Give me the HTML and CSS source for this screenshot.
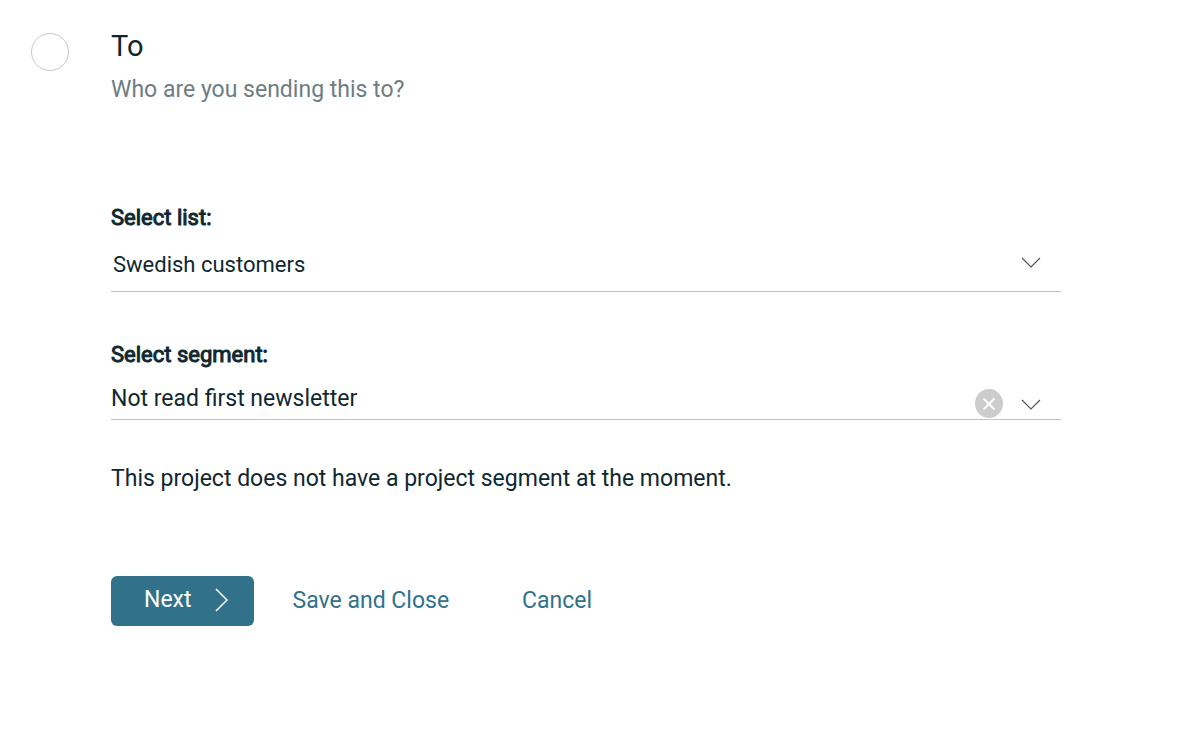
FILE: index.html
```html
<!DOCTYPE html>
<html lang="en">
<head>
<meta charset="utf-8">
<meta name="viewport" content="width=device-width, initial-scale=1">
<title>To</title>
<link rel="stylesheet" href="styles.css">
</head>
<body>
<main class="step">
  <input class="step-marker" type="radio" name="step" aria-labelledby="step-title">
  <form class="step-body">
    <h1 class="title" id="step-title">To</h1>
    <p class="subtitle">Who are you sending this to?</p>

    <label class="label" for="list">Select list:</label>
    <div class="field field-list">
      <select class="select" id="list"><option>Swedish customers</option></select>
      <span class="field-icons">
        <svg class="chevron" viewBox="0 0 20 12" aria-hidden="true"><path d="M1 1l9 9 9-9"/></svg>
      </span>
    </div>

    <label class="label" for="segment">Select segment:</label>
    <div class="field field-segment">
      <select class="select" id="segment"><option>Not read first newsletter</option></select>
      <span class="field-icons">
        <button class="clear" type="button" aria-label="Clear segment">
          <svg class="cross" viewBox="0 0 14 14" aria-hidden="true"><path d="M1.500 1.500l11 11M12.500 1.500l-11 11"/></svg>
        </button>
        <svg class="chevron" viewBox="0 0 20 12" aria-hidden="true"><path d="M1 1l9 9 9-9"/></svg>
      </span>
    </div>

    <p class="note">This project does not have a project segment at the moment.</p>

    <div class="actions">
      <button class="next" type="button">Next
        <svg class="arrow" viewBox="0 0 13 24" aria-hidden="true"><path d="M1 1l11 11L1 23"/></svg>
      </button>
      <button class="link" type="button">Save and Close</button>
      <button class="link" type="button">Cancel</button>
    </div>
  </form>
</main>
</body>
</html>
```
FILE: styles.css
```css
* { box-sizing: border-box; }

body {
  margin: 0;
  background: #fff;
  color: #0f2830;
  font: 23px/30px Roboto, sans-serif;
}

.step {
  display: flex;
  align-items: flex-start;
  gap: 42px;
  padding: 28px 117px 40px 31px;
}

.step-marker {
  appearance: none;
  flex: none;
  width: 38px;
  height: 38px;
  margin: 5px 0 0;
  border: 1px solid #c8c8c8;
  border-radius: 50%;
}

.step-body { flex: 1; min-width: 0; }

.title {
  margin: 0;
  font-size: 29px;
  line-height: 36px;
  font-weight: 400;
}

.subtitle { margin: 11px 0 98px; color: #6d7d83; }

.label {
  display: block;
  font-size: 22px;
  -webkit-text-stroke: 1px currentColor;
}

.field {
  display: grid;
  align-items: center;
  border-bottom: 1px solid #b9c3ca;
}

.field-list { height: 59px; margin-bottom: 48px; }
.field-list .select { padding-left: 2px; padding-top: 6px; font-size: 22px; }
.field-segment { height: 50px; }
.field-segment .select { padding-top: 8px; }

.select {
  grid-area: 1 / 1;
  appearance: none;
  width: 100%;
  height: 100%;
  border: 0;
  padding: 0;
  background: transparent;
  color: inherit;
  font: inherit;
}

.field-icons {
  grid-area: 1 / 1;
  justify-self: end;
  display: flex;
  align-items: center;
  gap: 18px;
  padding-right: 20px;
  pointer-events: none;
}

.field-segment .field-icons { align-self: end; padding-bottom: 1px; }

.chevron, .cross, .arrow { display: block; fill: none; stroke: currentColor; }
.chevron { width: 20px; height: 12px; margin-top: 2px; color: #555; stroke-width: 1.2; }

.clear {
  display: grid;
  place-items: center;
  width: 28px;
  height: 29px;
  padding: 0;
  border: 0;
  border-radius: 50%;
  background: #ccc;
  color: #fff;
  pointer-events: auto;
}

.cross { width: 14px; height: 14px; stroke-width: 2; }

.note { margin: 44px 0 82px; }

.actions { display: flex; align-items: center; }

.next, .link {
  border: 0;
  padding: 0;
  background: none;
  color: #32718a;
  font: inherit;
}

.next {
  display: flex;
  align-items: center;
  gap: 23px;
  height: 50px;
  padding: 0 26px 2px 33px;
  margin-right: 39px;
  border-radius: 6px;
  background: #32718a;
  color: #fff;
}

.arrow { width: 13px; height: 24px; stroke-width: 1.5; }
.link { margin-right: 73px; }
```
